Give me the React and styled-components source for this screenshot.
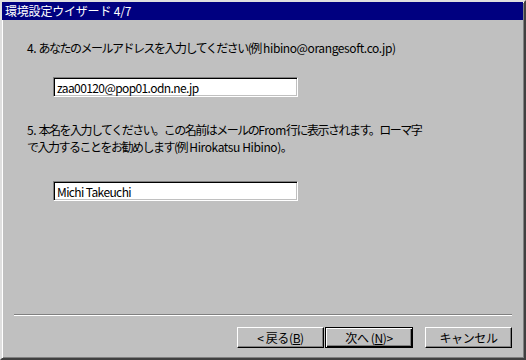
import React from "react";
import styled, { createGlobalStyle } from "styled-components";

const GlobalStyle = createGlobalStyle`
  html, body {
    margin: 0;
    padding: 0;
    background: #c0c0c0;
  }
  body {
    font-family: "Noto Sans CJK JP", "Liberation Sans", sans-serif;
    font-size: 12px;
    color: #000;
  }
`;

const Window = styled.div`
  width: 526px;
  height: 360px;
  box-sizing: border-box;
  display: flex;
  flex-direction: column;
  background: #c0c0c0;
  border-style: solid;
  border-width: 2px;
  border-color: #dfdfdf #404040 #404040 #dfdfdf;
  box-shadow: inset 1px 1px #fff, inset -1px -1px #808080;
`;

const TitleBar = styled.div`
  height: 18px;
  margin: 0 1px 0 0;
  background: #000080;
  color: #fff;
  font-size: 12px;
  line-height: 18px;
  padding-left: 3px;
  letter-spacing: -0.2px;
`;

const Body = styled.div`
  flex: 1;
  display: flex;
  flex-direction: column;
  padding: 20px 12px 10px 25px;
`;

const Prompt = styled.p`
  margin: ${(p) => p.$top}px 0 0;
  font-size: 12px;
  line-height: 17px;
  letter-spacing: -1.5px;
`;

const Latin = styled.span`
  letter-spacing: -0.4px;
`;

const Field = styled.input`
  display: block;
  margin: ${(p) => p.$top}px 0 0 26px;
  width: 245px;
  height: 20px;
  box-sizing: border-box;
  padding: 0 3px;
  font-family: "Noto Sans CJK JP", "Liberation Sans", sans-serif;
  font-size: 12px;
  letter-spacing: -0.6px;
  color: #000;
  background: #fff;
  border-style: solid;
  border-width: 1px;
  border-color: #808080 #fff #fff #808080;
  box-shadow: inset 1px 1px #000, inset -1px -1px #c0c0c0;
  outline: none;
`;

const Spacer = styled.div`
  flex: 1;
`;

const Separator = styled.div`
  margin-left: -13px;
  height: 0;
  border-top: 1px solid #808080;
  border-bottom: 1px solid #fff;
`;

const ButtonRow = styled.div`
  display: flex;
  justify-content: flex-end;
  margin-top: 11px;
`;

const Button = styled.button`
  width: ${(p) => p.$w}px;
  height: 21px;
  margin-left: ${(p) => p.$gap}px;
  padding: 0;
  box-sizing: border-box;
  font-family: "Noto Sans CJK JP", "Liberation Sans", sans-serif;
  font-size: 12px;
  letter-spacing: -0.4px;
  color: #000;
  background: #c0c0c0;
  border-style: solid;
  border-width: 1px;
  border-color: ${(p) => (p.$default ? "#000" : "#fff #000 #000 #fff")};
  box-shadow: ${(p) =>
    p.$default
      ? "inset 1px 1px #fff, inset -1px -1px #000, inset -2px -2px #808080"
      : "inset -1px -1px #808080"};
  u {
    text-decoration: underline;
  }
`;

export default function App() {
  return (
    <>
      <GlobalStyle />
      <Window>
        <TitleBar>環境設定ウイザード 4/7</TitleBar>
        <Body>
          <Prompt $top={-1}>
            <Latin>4. </Latin>あなたのメールアドレスを入力してください(例
            <Latin> hibino@orangesoft.co.jp)</Latin>
          </Prompt>
          <Field $top={21} defaultValue="zaa00120@pop01.odn.ne.jp" />
          <Prompt $top={24}>
            <Latin>5. </Latin>本名を入力してください。この名前はメールの
            <Latin>From</Latin>行に表示されます。ローマ字
            <br />
            で入力することをお勧めします(例
            <Latin> Hirokatsu Hibino)</Latin>。
          </Prompt>
          <Field $top={26} defaultValue="Michi Takeuchi" />
          <Spacer />
          <Separator />
          <ButtonRow>
            <Button $w={87} $gap={0}>
              &lt; 戻る(<u>B</u>)
            </Button>
            <Button $w={88} $gap={1} $default>
              次へ (<u>N</u>)&gt;
            </Button>
            <Button $w={87} $gap={12}>
              キャンセル
            </Button>
          </ButtonRow>
        </Body>
      </Window>
    </>
  );
}
